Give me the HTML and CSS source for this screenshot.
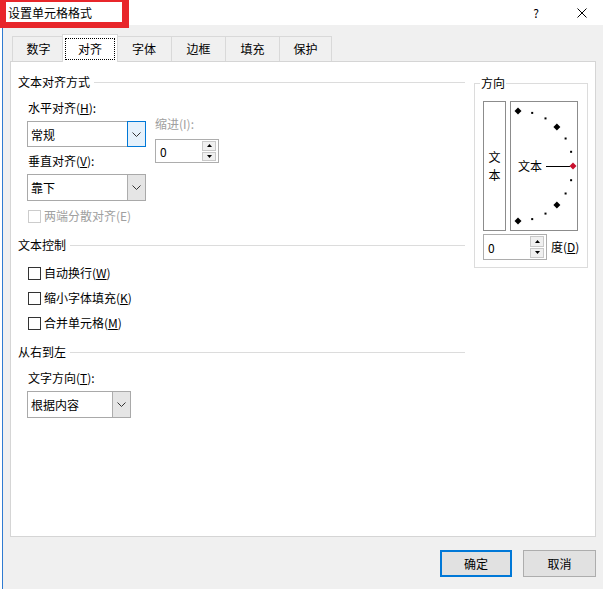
FILE: index.html
```html
<!DOCTYPE html>
<html lang="zh-CN">

<head>
    <meta charset="UTF-8">
    <title>设置单元格格式</title>
    <link rel="stylesheet" href="styles.css">
</head>

<body>
    <div class="mark"></div>

    <div class="dialog">
        <div class="titlebar">
            <span class="title">设置单元格格式</span>
            <span class="help">?</span>
            <svg class="close" width="10" height="10" viewBox="0 0 10 10">
                <path d="M0.5 0.5L9.5 9.5M9.5 0.5L0.5 9.5" stroke="#000" stroke-width="1" fill="none" />
            </svg>
        </div>

        <div class="tabs">
            <div class="tab t1">数字</div>
            <div class="tab active"><span class="focus">对齐</span></div>
            <div class="tab t3">字体</div>
            <div class="tab">边框</div>
            <div class="tab">填充</div>
            <div class="tab t6">保护</div>
        </div>

        <div class="panel">
            <div class="left-col">
                <div class="group-title"><span>文本对齐方式</span></div>
                <div class="section">
                    <div class="align-row">
                        <div class="align-main">
                            <div class="label label-first">水平对齐(<u>H</u>):</div>
                            <div class="select select-wide">
                                <span class="value">常规</span>
                                <span class="drop drop-hot">
                                    <svg width="9" height="5" viewBox="0 0 9 5"><path d="M0.5 0.5L4.5 4.5L8.5 0.5" stroke="#333" fill="none" /></svg>
                                </span>
                            </div>
                            <div class="label label-next">垂直对齐(<u>V</u>):</div>
                            <div class="select select-wide select-tall">
                                <span class="value">靠下</span>
                                <span class="drop">
                                    <svg width="9" height="5" viewBox="0 0 9 5"><path d="M0.5 0.5L4.5 4.5L8.5 0.5" stroke="#333" fill="none" /></svg>
                                </span>
                            </div>
                        </div>
                        <div class="indent">
                            <div class="label disabled">缩进(I):</div>
                            <div class="spin spin-indent">
                                <span class="spin-value">0</span>
                                <span class="spin-btns">
                                    <span class="spin-btn"><svg width="5" height="3" viewBox="0 0 5 3"><path d="M2.5 0L5 3H0Z" fill="#000" /></svg></span>
                                    <span class="spin-btn"><svg width="5" height="3" viewBox="0 0 5 3"><path d="M0 0H5L2.5 3Z" fill="#000" /></svg></span>
                                </span>
                            </div>
                        </div>
                    </div>
                    <div class="check check-justify disabled"><span class="box"></span>两端分散对齐(E)</div>
                </div>

                <div class="group-title group-gap"><span>文本控制</span></div>
                <div class="section">
                    <div class="check check-first"><span class="box"></span>自动换行(<u>W</u>)</div>
                    <div class="check check-next"><span class="box"></span>缩小字体填充(<u>K</u>)</div>
                    <div class="check check-next"><span class="box"></span>合并单元格(<u>M</u>)</div>
                </div>

                <div class="group-title group-gap"><span>从右到左</span></div>
                <div class="section">
                    <div class="label label-first">文字方向(<u>T</u>):</div>
                    <div class="select select-narrow select-tall">
                        <span class="value">根据内容</span>
                        <span class="drop">
                            <svg width="9" height="5" viewBox="0 0 9 5"><path d="M0.5 0.5L4.5 4.5L8.5 0.5" stroke="#333" fill="none" /></svg>
                        </span>
                    </div>
                </div>
            </div>

            <div class="right-col">
                <div class="group-box">
                    <span class="group-legend">方向</span>
                    <div class="orient-row">
                        <div class="vert-text"><span>文</span><span>本</span></div>
                        <div class="dial">
                            <svg width="66" height="128" viewBox="0 0 66 128">
                                <polygon points="7,5.5 10.5,9 7,12.5 3.5,9" fill="#000" />
                                <rect x="20.2" y="9.9" width="2" height="2" fill="#000" />
                                <rect x="33.5" y="15.4" width="2" height="2" fill="#000" />
                                <polygon points="45.9,21.6 49.4,25.1 45.9,28.6 42.4,25.1" fill="#000" />
                                <rect x="53.6" y="35.5" width="2" height="2" fill="#000" />
                                <rect x="59.1" y="48.8" width="2" height="2" fill="#000" />
                                <line x1="35" y1="64.5" x2="59" y2="64.5" stroke="#000" stroke-width="1" />
                                <polygon points="62,60.5 65.5,64 62,67.5 58.5,64" fill="#c8102e" />
                                <rect x="59.1" y="77.2" width="2" height="2" fill="#000" />
                                <rect x="53.6" y="90.5" width="2" height="2" fill="#000" />
                                <polygon points="45.9,99.4 49.4,102.9 45.9,106.4 42.4,102.9" fill="#000" />
                                <rect x="33.5" y="110.6" width="2" height="2" fill="#000" />
                                <rect x="20.2" y="116.1" width="2" height="2" fill="#000" />
                                <polygon points="7,115.5 10.5,119 7,122.5 3.5,119" fill="#000" />
                                <text x="7" y="68.5" font-size="12" font-family="Noto Sans CJK SC, sans-serif" fill="#000">文本</text>
                            </svg>
                        </div>
                    </div>
                    <div class="deg-row">
                        <div class="spin spin-deg">
                            <span class="spin-value">0</span>
                            <span class="spin-btns">
                                <span class="spin-btn"><svg width="5" height="3" viewBox="0 0 5 3"><path d="M2.5 0L5 3H0Z" fill="#000" /></svg></span>
                                <span class="spin-btn"><svg width="5" height="3" viewBox="0 0 5 3"><path d="M0 0H5L2.5 3Z" fill="#000" /></svg></span>
                            </span>
                        </div>
                        <span class="deg-label">度(<u>D</u>)</span>
                    </div>
                </div>
            </div>
        </div>

        <div class="buttons">
            <div class="btn btn-default">确定</div>
            <div class="btn">取消</div>
        </div>
    </div>
</body>

</html>
```

FILE: styles.css
```css
* {
    box-sizing: border-box;
}

body {
    margin: 0;
    width: 603px;
    height: 589px;
    overflow: hidden;
    background-color: #fff;
    font-family: "Noto Sans CJK SC", sans-serif;
    font-size: 12px;
    color: #000;
    position: relative;
}

u {
    text-decoration: underline;
    text-underline-offset: 1px;
}

/* red note box over the title */
.mark {
    position: absolute;
    left: 0;
    top: 0;
    width: 129px;
    height: 28px;
    border-style: solid;
    border-color: #e8262b;
    border-width: 2px 7px 6px 6px;
    z-index: 5;
    pointer-events: none;
}

.dialog {
    margin-left: 2px;
    border-left: 1px solid #2f7bd1;
    height: 589px;
    background-color: #f0f0f0;
}

.titlebar {
    height: 25px;
    background-color: #fff;
    display: flex;
    align-items: center;
    padding-left: 5px;
    padding-right: 16px;
}

.title {
    flex: 1;
    line-height: 16px;
}

.help {
    line-height: 16px;
    margin-right: 38px;
}

.close {
    display: block;
}

.tabs {
    display: flex;
    align-items: flex-end;
    height: 27px;
    margin-top: 9px;
    padding-left: 9px;
}

.tab {
    height: 25px;
    width: 54px;
    border-top: 1px solid #d9d9d9;
    border-left: 1px solid #d9d9d9;
    background-color: #f0f0f0;
    display: flex;
    align-items: center;
    justify-content: center;
    line-height: 16px;
}

.tab.t1 {
    width: 52px;
}

.tab.t3 {
    width: 55px;
}

.tab.t6 {
    width: 53px;
    border-right: 1px solid #d9d9d9;
}

.tab.active {
    position: relative;
    z-index: 1;
    width: 56px;
    height: 28px;
    margin: 0 -2px -1px -2px;
    background-color: #fff;
    border-right: 1px solid #d9d9d9;
}

.focus {
    width: 50px;
    height: 22px;
    border: 1px dotted #000;
    display: flex;
    align-items: center;
    justify-content: center;
    margin-top: 1px;
}

.panel {
    margin-left: 7px;
    width: 586px;
    height: 476px;
    background-color: #fff;
    border: 1px solid #d5d5d5;
    display: flex;
    padding: 12px 0 0 7px;
}

.left-col {
    width: 447px;
}

.group-title {
    display: flex;
    align-items: center;
    height: 16px;
    line-height: 16px;
}

.group-title span {
    padding-right: 4px;
}

.group-title::after {
    content: "";
    flex: 1;
    border-top: 1px solid #dcdcdc;
    margin-top: 1px;
}

.group-gap {
    margin-top: 13px;
}

.section {
    padding-left: 9px;
}

.label {
    height: 16px;
    line-height: 16px;
    padding-left: 1px;
}

.label-first {
    margin-top: 10px;
}

.label-next {
    margin-top: 6px;
}

.disabled {
    color: #a0a0a0;
}

.align-row {
    display: flex;
}

.align-main {
    width: 119px;
}

.indent {
    margin-left: 9px;
    padding-top: 26px;
}

.indent .label {
    padding-left: 0;
}

.select {
    display: flex;
    align-items: stretch;
    height: 26px;
    margin-top: 5px;
    border: 1px solid #a9a9a9;
    background-color: #fff;
}

.select-tall {
    height: 27px;
}

.select-wide {
    width: 119px;
}

.select-narrow {
    width: 104px;
}

.select .value {
    flex: 1;
    padding-left: 3px;
    display: flex;
    align-items: center;
}

.drop {
    width: 18px;
    border-left: 1px solid #adadad;
    background-color: #e5e5e5;
    display: flex;
    align-items: center;
    justify-content: center;
}

.drop svg {
    display: block;
}

.drop-hot {
    border: 1px solid #0078d7;
    background-color: #e5f1fb;
    margin: -1px -1px -1px 0;
    width: 19px;
}

.spin {
    display: flex;
    border: 1px solid #adadad;
    background-color: #fff;
}

.spin-indent {
    width: 64px;
    height: 24px;
    margin-top: 7px;
}

.spin-deg {
    width: 64px;
    height: 26px;
}

.spin-value {
    flex: 1;
    padding-left: 4px;
    display: flex;
    align-items: center;
}

.spin-btns {
    width: 14px;
    margin: 1px 2px 1px 0;
    display: flex;
    flex-direction: column;
    gap: 1px;
}

.spin-btn {
    flex: 1;
    border: 1px solid #c9c9c9;
    background-color: #f0f0f0;
    display: flex;
    align-items: center;
    justify-content: center;
}

.spin-btn svg {
    display: block;
}

.check {
    display: flex;
    align-items: center;
    height: 16px;
    line-height: 16px;
    padding-left: 1px;
}

.box {
    width: 13px;
    height: 13px;
    border: 1px solid #333;
    background-color: #fff;
    margin-right: 3px;
}

.check.disabled .box {
    border-color: #cccccc;
}

.check-justify {
    margin-top: 7px;
}

.check-first {
    margin-top: 12px;
}

.check-next {
    margin-top: 9px;
}

.right-col {
    margin-left: 9px;
    width: 114px;
    padding-top: 9px;
}

.group-box {
    position: relative;
    height: 185px;
    border: 1px solid #dcdcdc;
    padding: 17px 0 0 8px;
}

.group-legend {
    position: absolute;
    top: -9px;
    left: 5px;
    padding: 0 1px;
    line-height: 16px;
    background-color: #fff;
}

.orient-row {
    display: flex;
    gap: 4px;
}

.vert-text {
    width: 23px;
    height: 130px;
    border: 1px solid #8c8c8c;
    display: flex;
    flex-direction: column;
    align-items: center;
    justify-content: center;
    line-height: 18px;
}

.dial {
    width: 68px;
    height: 130px;
    border: 1px solid #8c8c8c;
}

.dial svg {
    display: block;
}

.deg-row {
    display: flex;
    align-items: center;
    margin-top: 3px;
}

.deg-label {
    margin-left: 4px;
    line-height: 16px;
}

.buttons {
    display: flex;
    justify-content: flex-end;
    gap: 11px;
    margin-top: 13px;
    padding-right: 7px;
}

.btn {
    width: 73px;
    height: 27px;
    border: 1px solid #adadad;
    background-color: #e1e1e1;
    display: flex;
    align-items: center;
    justify-content: center;
}

.btn-default {
    width: 72px;
    border: 2px solid #0078d7;
}
```
